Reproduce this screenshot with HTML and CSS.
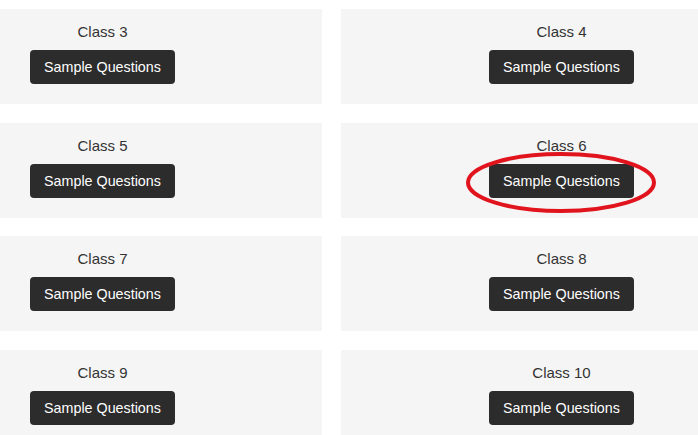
FILE: index.html
```html
<!DOCTYPE html>
<html lang="en">
<head>
<meta charset="utf-8">
<title>Classes</title>
<link rel="stylesheet" href="styles.css">
</head>
<body>
<div class="grid">
  <div class="card card-left"><div class="stack"><div class="label">Class 3</div><a class="btn">Sample Questions</a></div></div>
  <div class="card card-right"><div class="stack"><div class="label">Class 4</div><a class="btn">Sample Questions</a></div></div>
  <div class="card card-left"><div class="stack"><div class="label">Class 5</div><a class="btn">Sample Questions</a></div></div>
  <div class="card card-right"><div class="stack"><div class="label">Class 6</div><a class="btn">Sample Questions</a></div>
    <svg class="circle" width="192" height="63" viewBox="0 0 192 63"><ellipse cx="96" cy="31.5" rx="93" ry="28.5" fill="none" stroke="#e1141d" stroke-width="4"/></svg>
  </div>
  <div class="card card-left"><div class="stack"><div class="label">Class 7</div><a class="btn">Sample Questions</a></div></div>
  <div class="card card-right"><div class="stack"><div class="label">Class 8</div><a class="btn">Sample Questions</a></div></div>
  <div class="card card-left"><div class="stack"><div class="label">Class 9</div><a class="btn">Sample Questions</a></div></div>
  <div class="card card-right"><div class="stack"><div class="label">Class 10</div><a class="btn">Sample Questions</a></div></div>
</div>
</body>
</html>
```

FILE: styles.css
```css
html, body {
  margin: 0;
  padding: 0;
  background: #ffffff;
  overflow: hidden;
}
body {
  font-family: "Liberation Sans", Arial, sans-serif;
  color: #333333;
}
.grid {
  display: grid;
  grid-template-columns: 322px 1fr;
  grid-auto-rows: 95px;
  column-gap: 19px;
  row-gap: 18.7px;
  padding-top: 9px;
}
.card {
  position: relative;
  background: #f5f5f5;
  padding-top: 14px;
  box-sizing: border-box;
}
.card-left { padding-left: 30px; }
.card-right { padding-left: 148px; }
.stack {
  display: inline-flex;
  flex-direction: column;
  align-items: center;
}
.label {
  font-size: 15px;
  line-height: 17px;
  color: #333333;
}
.btn {
  margin-top: 10px;
  display: flex;
  align-items: center;
  justify-content: center;
  width: 145px;
  height: 34px;
  background: #2c2c2c;
  color: #ffffff;
  border-radius: 4px;
  font-size: 14.3px;
}
.circle {
  position: absolute;
  left: 124px;
  top: 28px;
}
```
